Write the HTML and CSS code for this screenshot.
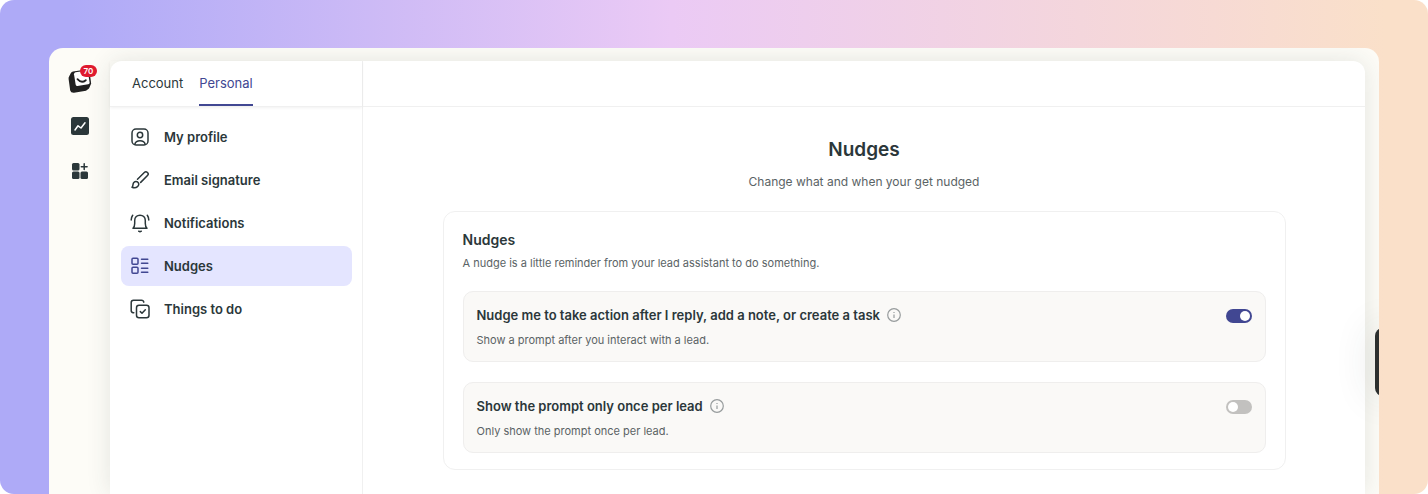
FILE: index.html
```html
<!DOCTYPE html>
<html lang="en">
<head>
    <meta charset="UTF-8">
    <meta name="viewport" content="width=device-width, initial-scale=1.0">
    <title>Nudges - Settings</title>
    <link rel="stylesheet" href="styles.css">
</head>
<body>
    <div class="backdrop">
        <div class="window">
            <nav class="rail" aria-label="Main">
                <a href="#" class="rail-link logo" aria-label="Inbox">
                    <svg width="24" height="26" viewBox="0 0 24 26">
                        <path d="M5 3.5 18.500 1.500Q21 1.300 21.500 3.500L23.200 15.500 21 20.500 18 22.800 6 24.800Q2.800 25 2.200 22.500L.6 11Q.4 9.500 1.200 8.200L3 4.800Q3.800 3.700 5 3.500Z" fill="#212121"/>
                        <path d="M7.500 4.200 18 2.800Q19.700 2.700 20 4.200L21.600 14.500Q21.700 16 20.200 16.300L9.500 18Q8 18.100 7.700 16.700L6 6.200Q5.900 4.500 7.500 4.200Z" fill="#fff"/>
                        <path d="M9.500 11.200Q13.500 15.800 17.800 12.200" fill="none" stroke="#212121" stroke-width="1.800" stroke-linecap="round"/>
                    </svg>
                    <span class="badge">70</span>
                </a>
                <a href="#" class="rail-link" aria-label="Reports">
                    <svg width="20" height="20" viewBox="0 0 20 20">
                        <rect x="1" y="1" width="18" height="18" rx="2.500" fill="#2b373a"/>
                        <path d="M5 14 8 9.800 11 12 15 6.800" fill="none" stroke="#fff" stroke-width="1.500" stroke-linecap="round" stroke-linejoin="round"/>
                    </svg>
                </a>
                <a href="#" class="rail-link" aria-label="Apps">
                    <svg width="20" height="20" viewBox="0 0 20 20" fill="#2b373a">
                        <rect x="2" y="2" width="7.500" height="7.500" rx="1.500"/>
                        <rect x="2" y="10.500" width="7.500" height="7.500" rx="1.500"/>
                        <rect x="10.500" y="10.500" width="7.500" height="7.500" rx="1.500"/>
                        <path d="M14.200 2.800V8.600M11.300 5.700H17.100" stroke="#2b373a" stroke-width="1.500" stroke-linecap="round"/>
                    </svg>
                </a>
            </nav>

            <div class="panel">
                <aside class="sidebar">
                    <div class="tabs">
                        <a href="#" class="tab">Account</a>
                        <a href="#" class="tab active">Personal</a>
                    </div>
                    <nav class="menu" aria-label="Personal settings">
                        <a href="#" class="menu-item">
                            <svg class="icon" viewBox="0 0 20 20">
                                <rect x="2" y="2" width="16" height="16" rx="4"/>
                                <circle cx="10" cy="8" r="2.700"/>
                                <path d="M4.800 17.200C5.500 14.800 7.500 13.800 10 13.800S14.500 14.800 15.200 17.200"/>
                            </svg>
                            My profile
                        </a>
                        <a href="#" class="menu-item">
                            <svg class="icon" viewBox="0 0 20 20">
                                <path d="M7.500 9.300 14.300 2.500A2.200 2.200 0 0 1 17.500 5.600L10.700 12.400"/>
                                <path d="M3.800 12.500C5 11.300 7 11.300 8.100 12.500 9.200 13.800 8.900 15.600 7.500 16.700 6 17.900 3.500 17.800 2 17.200 3.300 16 2.600 13.900 3.800 12.500Z"/>
                            </svg>
                            Email signature
                        </a>
                        <a href="#" class="menu-item">
                            <svg class="icon" viewBox="0 0 20 20">
                                <path d="M3 15.300H17C15.600 14 15.300 12.500 15.300 10.500V7.500C15.300 4.300 13 2.200 10 2.200S4.700 4.300 4.700 7.500V10.500C4.700 12.500 4.400 14 3 15.300Z"/>
                                <path d="M8.700 18.200Q10 19.200 11.300 18.200M2.700 2.300Q1.300 4.200 1.200 7M17.300 2.300Q18.700 4.200 18.800 7"/>
                            </svg>
                            Notifications
                        </a>
                        <a href="#" class="menu-item active">
                            <svg class="icon" viewBox="0 0 20 20">
                                <rect x="2" y="2.300" width="6" height="6" rx="1"/>
                                <rect x="2" y="11.200" width="6" height="6" rx="1"/>
                                <path d="M11.500 3.300H17.800M11.500 7.300H17.800M11.500 12.200H17.800M11.500 16.200H17.800"/>
                            </svg>
                            Nudges
                        </a>
                        <a href="#" class="menu-item">
                            <svg class="icon" viewBox="0 0 20 20">
                                <rect x="6.500" y="6.300" width="12.500" height="12.500" rx="2.500"/>
                                <path d="M3.800 13.800H3.200Q1.200 13.500 1.200 11.500V3.500Q1.200 1.200 3.500 1.200H11.500Q13.500 1.200 13.800 3.200M10.300 12.600 12 14.300 15.300 10.800"/>
                            </svg>
                            Things to do
                        </a>
                    </nav>
                </aside>

                <main class="content">
                    <div class="topbar"></div>
                    <div class="page">
                        <header class="page-header">
                            <h1 class="page-title">Nudges</h1>
                            <p class="page-subtitle">Change what and when your get nudged</p>
                        </header>

                        <section class="card">
                            <h2 class="card-title">Nudges</h2>
                            <p class="card-text">A nudge is a little reminder from your lead assistant to do something.</p>

                            <div class="setting">
                                <div class="setting-info">
                                    <div class="setting-name">
                                        <label for="nudgeAction">Nudge me to take action after I reply, add a note, or create a task</label>
                                        <svg class="info" viewBox="0 0 14 14">
                                            <circle cx="7" cy="7" r="6.300"/>
                                            <path d="M7 6.500V10M7 4V5"/>
                                        </svg>
                                    </div>
                                    <p class="setting-text">Show a prompt after you interact with a lead.</p>
                                </div>
                                <input type="checkbox" class="toggle" id="nudgeAction" checked>
                            </div>

                            <div class="setting">
                                <div class="setting-info">
                                    <div class="setting-name">
                                        <label for="nudgeOnce">Show the prompt only once per lead</label>
                                        <svg class="info" viewBox="0 0 14 14">
                                            <circle cx="7" cy="7" r="6.300"/>
                                            <path d="M7 6.500V10M7 4V5"/>
                                        </svg>
                                    </div>
                                    <p class="setting-text">Only show the prompt once per lead.</p>
                                </div>
                                <input type="checkbox" class="toggle" id="nudgeOnce">
                            </div>
                        </section>
                    </div>
                </main>
            </div>

            <button class="drawer-handle" type="button" aria-label="Open drawer"></button>
        </div>
    </div>
</body>
</html>
```
FILE: styles.css
```css
* {
    margin: 0;
    padding: 0;
    box-sizing: border-box;
}

body {
    font-family: 'Inter', sans-serif;
    font-size: 13px;
    color: #2b373a;
    background: #fff;
}

a {
    color: inherit;
    text-decoration: none;
}

.backdrop {
    display: flex;
    min-height: 100vh;
    padding: 48px 49px 0;
    border-radius: 14px;
    background: linear-gradient(90deg, #aeaaf7 0%, #aeaaf7 5%, #ebcaf5 47%, #f7dad4 85%, #fae0c9 97%);
}

.window {
    position: relative;
    display: flex;
    flex: 1;
    padding: 13px 14px 0 0;
    border-radius: 14px 14px 0 0;
    background: #fdfcf7;
    overflow: hidden;
}

/* Icon rail */
.rail {
    display: flex;
    flex-direction: column;
    align-items: center;
    gap: 25px;
    width: 61px;
    padding-top: 7px;
}

.rail-link {
    display: flex;
}

.logo {
    position: relative;
    margin-bottom: -3px;
}

.badge {
    position: absolute;
    top: -3px;
    left: 12px;
    padding: 0 4px;
    border-radius: 6px;
    background: #df1b2f;
    color: #fff;
    font-size: 8px;
    font-weight: 600;
    line-height: 12px;
}

/* Main panel */
.panel {
    display: flex;
    flex: 1;
    border-radius: 12px 12px 0 0;
    background: #fff;
    box-shadow: 0 0 24px rgba(43, 55, 58, 0.12);
}

.sidebar {
    width: 253px;
    border-right: 1px solid #f0f0f0;
}

.tabs {
    display: flex;
    gap: 16px;
    height: 46px;
    padding: 0 22px;
    border-bottom: 1px solid #f0f0f0;
    box-shadow: 0 1px 3px rgba(0, 0, 0, 0.06);
}

.tab {
    height: 45px;
    line-height: 45px;
}

.tab.active {
    color: #414792;
    border-bottom: 2px solid #414792;
}

.menu {
    display: flex;
    flex-direction: column;
    gap: 3px;
    padding: 10px 10px 10px 11px;
}

.menu-item {
    display: flex;
    align-items: center;
    gap: 14px;
    height: 40px;
    padding: 0 9px;
    border-radius: 8px;
    font-weight: 600;
}

.menu-item.active {
    background: #e4e5ff;
}

.icon {
    width: 20px;
    height: 20px;
    fill: none;
    stroke: currentColor;
    stroke-width: 1.5;
    stroke-linecap: round;
    stroke-linejoin: round;
}

.menu-item.active .icon {
    stroke: #414792;
}

/* Settings page */
.content {
    flex: 1;
}

.topbar {
    height: 46px;
    border-bottom: 1px solid #f0f0f0;
}

.page {
    max-width: 883px;
    margin: 0 auto;
    padding: 30px 20px 24px;
}

.page-header {
    margin-bottom: 20px;
    text-align: center;
}

.page-title {
    font-size: 19px;
    font-weight: 600;
    line-height: 26px;
}

.page-subtitle {
    margin-top: 10px;
    color: #5a6365;
    font-size: 12px;
    line-height: 18px;
}

.card {
    padding: 18px 19px 16px;
    border: 1px solid #f0f0f0;
    border-radius: 12px;
}

.card-title {
    font-size: 14px;
    font-weight: 600;
    line-height: 20px;
}

.card-text,
.setting-text {
    color: #5a6365;
    font-size: 11px;
    line-height: 16px;
}

.card-text {
    margin-top: 5px;
}

.setting {
    display: flex;
    align-items: center;
    justify-content: space-between;
    margin-top: 20px;
    padding: 14px 13px 13px;
    border: 1px solid #efeeed;
    border-radius: 10px;
    background: #faf9f7;
}

.setting-name {
    display: flex;
    align-items: center;
    gap: 7px;
    font-weight: 600;
    line-height: 18px;
}

.setting-text {
    margin-top: 8px;
}

.info {
    width: 14px;
    height: 14px;
    fill: none;
    stroke: #979c9d;
    stroke-width: 1.2;
}

.toggle {
    display: flex;
    align-items: center;
    align-self: flex-start;
    appearance: none;
    width: 26px;
    height: 14px;
    margin-top: 3px;
    padding: 0 2px;
    border-radius: 7px;
    background: #c2c1bf;
    cursor: pointer;
}

.toggle::before {
    content: '';
    width: 10px;
    height: 10px;
    border-radius: 50%;
    background: #fff;
}

.toggle:checked {
    justify-content: flex-end;
    background: #414792;
}

/* Sticks out of the right edge of the window */
.drawer-handle {
    position: absolute;
    top: 280px;
    right: -20px;
    width: 24px;
    height: 68px;
    border: 0;
    border-radius: 8px;
    background: #2c2f2e;
    box-shadow: 0 0 40px rgba(43, 55, 58, 0.14);
}
```
